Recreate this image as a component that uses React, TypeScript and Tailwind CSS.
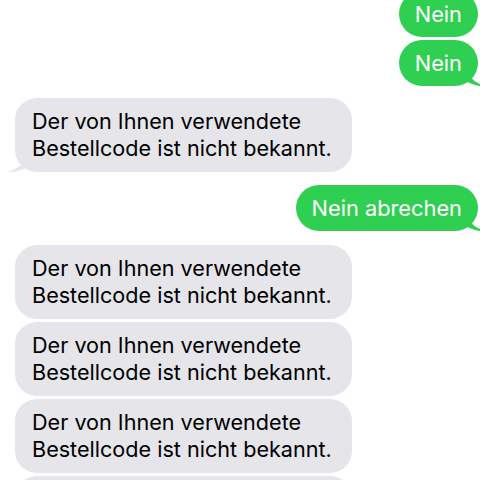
import React from "react";

const GREEN = "#2fd052";
const GREY = "#e5e5ea";

function GreenBubble({ text, tail, className = "" }: { text: string; tail?: boolean; className?: string }) {
  return (
    <div className={`relative self-end mr-[2px] ${className}`}>
      <div
        className="relative z-10 h-[46px] flex items-center pl-[16px] pr-[16px] rounded-[23px] text-white text-[21.8px] leading-[27px] whitespace-nowrap"
        style={{ backgroundColor: GREEN }}
      >
        {text}
      </div>
      {tail && (
        <svg className="absolute right-[-9px] bottom-[-1px] z-0" width="22" height="22" viewBox="0 0 22 22">
          <path d="M2 0 C2 10 8 18 21 21 C12 21.5 6 19 1 16 Z" fill={GREEN} />
        </svg>
      )}
    </div>
  );
}

function GreyBubble({ tail, className = "" }: { tail?: boolean; className?: string }) {
  return (
    <div className={`relative self-start ml-[15px] ${className}`}>
      <div
        className="relative z-10 w-[337px] h-[74px] flex flex-col justify-center pl-[17px] rounded-[22px] text-black text-[21.6px] leading-[27px] whitespace-nowrap"
        style={{ backgroundColor: GREY }}
      >
        <div>Der von Ihnen verwendete</div>
        <div>Bestellcode ist nicht bekannt.</div>
      </div>
      {tail && (
        <svg className="absolute left-[-9px] bottom-[-1px] z-0" width="22" height="22" viewBox="0 0 22 22">
          <path d="M20 0 C20 10 14 18 1 21 C10 21.5 16 19 21 16 Z" fill={GREY} />
        </svg>
      )}
    </div>
  );
}

export default function App() {
  return (
    <div
      className="w-[480px] h-[480px] overflow-hidden bg-white flex flex-col"
      style={{ fontFamily: "Inter, 'Liberation Sans', sans-serif" }}
    >
      <GreenBubble text="Nein" className="mt-[-9px]" />
      <GreenBubble text="Nein" tail className="mt-[3px]" />
      <GreyBubble tail className="mt-[12px]" />
      <GreenBubble text="Nein abrechen" tail className="mt-[13px]" />
      <GreyBubble className="mt-[14px]" />
      <GreyBubble className="mt-[3px]" />
      <GreyBubble className="mt-[3px]" />
      <GreyBubble className="mt-[3px]" />
    </div>
  );
}
